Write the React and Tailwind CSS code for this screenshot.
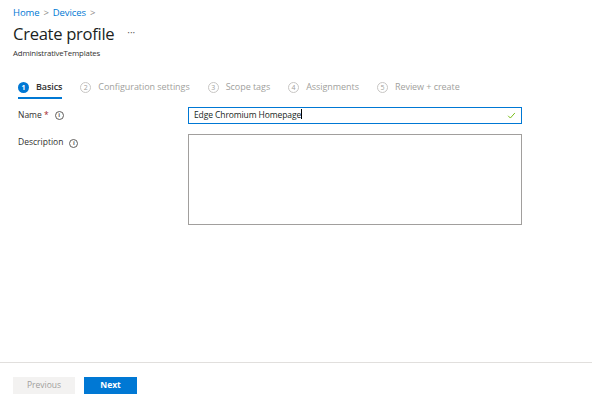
import React from 'react';

const font = { fontFamily: '"Open Sans", "Noto Sans", sans-serif' };

function StepCircle({ n, active }) {
  return active ? (
    <span className="flex h-[11px] w-[11px] items-center justify-center rounded-full bg-[#0078d4] text-[7px] font-bold leading-none text-white">
      {n}
    </span>
  ) : (
    <span className="flex h-[11px] w-[11px] items-center justify-center rounded-full border border-[#c8c6c4] text-[7px] leading-none text-[#a19f9d]">
      {n}
    </span>
  );
}

function InfoIcon() {
  return (
    <span className="flex h-[9px] w-[9px] items-center justify-center rounded-full border border-[#605e5c] text-[6px] font-bold leading-none text-[#605e5c]">
      i
    </span>
  );
}

export default function App() {
  const steps = [
    { n: 1, label: 'Basics', active: true },
    { n: 2, label: 'Configuration settings' },
    { n: 3, label: 'Scope tags' },
    { n: 4, label: 'Assignments' },
    { n: 5, label: 'Review + create' },
  ];

  return (
    <div className="flex h-[406px] w-[592px] flex-col bg-white text-[#323130]" style={font}>
      <div className="flex-1">
        {/* header */}
        <div className="px-[13px] pt-[6px]">
          <div className="flex items-center gap-[4px] text-[9.5px] tracking-[-0.1px] text-[#0078d4]">
            <span>Home</span>
            <span className="text-[#8a8886]">&gt;</span>
            <span>Devices</span>
            <span className="text-[#8a8886]">&gt;</span>
          </div>
          <div className="mt-[1px] flex items-center">
            <h1 className="text-[16.6px] font-normal leading-[26px] tracking-[-0.3px] text-[#201f1e]">Create profile</h1>
            <span className="ml-[13px] pb-[4px] text-[10px] text-[#605e5c]">···</span>
          </div>
          <div className="text-[7.8px] leading-[12px] tracking-[-0.15px] text-[#323130]">AdministrativeTemplates</div>
        </div>

        {/* steps */}
        <div className="mt-[21px] flex items-start gap-[18px] pl-[18px]">
          {steps.map((s) => (
            <div key={s.n} className="flex flex-col">
              <div className="flex items-center gap-[7px]">
                <StepCircle n={s.n} active={s.active} />
                <span className={s.active ? 'text-[9px] font-semibold tracking-[-0.1px] text-[#323130]' : 'text-[9px] tracking-[-0.05px] text-[#a19f9d]'}>
                  {s.label}
                </span>
              </div>
              <div className={s.active ? 'mt-[3px] h-[2px] bg-[#0078d4]' : 'mt-[3px] h-[2px]'} />
            </div>
          ))}
        </div>

        {/* form */}
        <div className="mt-[8px] grid grid-cols-[170px_334px] gap-y-[10px] pl-[18px]">
          <div className="flex h-[17px] items-center gap-[6px] text-[8.5px]">
            <span>
              Name <span className="text-[#a4262c]">*</span>
            </span>
            <InfoIcon />
          </div>
          <div className="flex h-[17px] items-center border border-[#0078d4] px-[5px]">
            <span className="flex-1 text-[8.5px] tracking-[-0.1px] text-[#201f1e]">
              Edge Chromium Homepage<span className="inline-block h-[10px] w-px translate-y-[1px] bg-black" />
            </span>
            <svg width="9" height="9" viewBox="0 0 16 16" fill="none">
              <path d="M2 8.5l4 4 8-9" stroke="#6bb700" strokeWidth="1.6" />
            </svg>
          </div>

          <div className="flex h-[16px] items-start gap-[6px] pt-[2px] text-[8.5px]">
            <span>Description</span>
            <span className="mt-[3px]">
              <InfoIcon />
            </span>
          </div>
          <div className="h-[91px] border border-[#a19f9d]" />
        </div>
      </div>

      {/* footer */}
      <div className="h-[44px] border-t border-[#e1dfdd] px-[13px] pt-[14px]">
        <div className="flex gap-[9px]">
          <button className="h-[17px] w-[62px] bg-[#f3f2f1] text-[8.5px] text-[#a19f9d]">Previous</button>
          <button className="h-[17px] w-[53px] bg-[#0078d4] text-[8.5px] font-bold text-white">Next</button>
        </div>
      </div>
    </div>
  );
}
